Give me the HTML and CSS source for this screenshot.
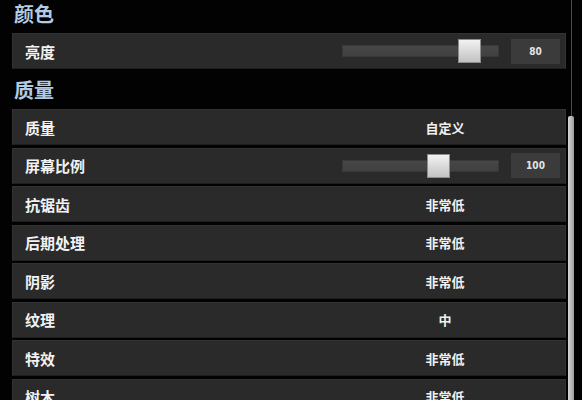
FILE: index.html
```html
<!DOCTYPE html>
<html lang="zh">
<head>
<meta charset="utf-8">
<title>设置</title>
<link rel="stylesheet" href="styles.css">
</head>
<body>
<div class="page">
  <div class="content">
    <h2 class="section first">颜色</h2>
    <div class="row">
      <span class="label">亮度</span>
      <div class="control slider">
        <div class="track"><div class="thumb" style="left:115px"></div></div>
        <div class="value-box">80</div>
      </div>
    </div>

    <h2 class="section">质量</h2>
    <div class="row">
      <span class="label">质量</span>
      <div class="control choice">自定义</div>
    </div>
    <div class="row">
      <span class="label">屏幕比例</span>
      <div class="control slider">
        <div class="track"><div class="thumb" style="left:84px"></div></div>
        <div class="value-box">100</div>
      </div>
    </div>
    <div class="row">
      <span class="label">抗锯齿</span>
      <div class="control choice">非常低</div>
    </div>
    <div class="row">
      <span class="label">后期处理</span>
      <div class="control choice">非常低</div>
    </div>
    <div class="row">
      <span class="label">阴影</span>
      <div class="control choice">非常低</div>
    </div>
    <div class="row">
      <span class="label">纹理</span>
      <div class="control choice">中</div>
    </div>
    <div class="row">
      <span class="label">特效</span>
      <div class="control choice">非常低</div>
    </div>
    <div class="row">
      <span class="label">树木</span>
      <div class="control choice">非常低</div>
    </div>
  </div>
  <div class="scrollbar">
    <div class="scroll-line"></div>
    <div class="scroll-thumb"></div>
  </div>
</div>
</body>
</html>
```

FILE: styles.css
```css
* { box-sizing: border-box; }
html, body {
  margin: 0;
  padding: 0;
  background: #020202;
}
body {
  font-family: "Noto Sans CJK SC", "Noto Sans", sans-serif;
  color: #f0f0f0;
}
.page {
  display: flex;
  height: 400px;
  overflow: hidden;
}
.content {
  width: 566px;
  padding-left: 12px;
  flex: none;
}
.section {
  margin: 7px 0 5px 2px;
  height: 28px;
  line-height: 27px;
  font-size: 20px;
  font-weight: 700;
  color: #b3cbe2;
}
.section.first {
  margin-top: 0;
}
.row {
  display: grid;
  grid-template-columns: 1fr 230px;
  align-items: center;
  height: 36px;
  margin-bottom: 2.5px;
  padding: 0 5px 0 12px;
  background: #2a2a2a;
  border: 1px solid #323232;
  border-bottom-color: #1e1e1e;
}
.label {
  font-size: 15px;
  font-weight: 700;
  color: #f2f2f2;
  line-height: 1;
}
.control.choice {
  text-align: center;
  font-size: 13px;
  font-weight: 700;
  color: #f0f0f0;
  line-height: 1;
}
.control.slider {
  display: flex;
  align-items: center;
  gap: 12px;
  padding-left: 12px;
}
.track {
  position: relative;
  width: 157px;
  height: 12px;
  background: linear-gradient(#474747, #404040);
  border: 1px solid #383838;
}
.thumb {
  position: absolute;
  top: -7px;
  width: 23px;
  height: 24px;
  background: linear-gradient(#f2f2f2, #c2c2c2);
  border: 1px solid #8d8d8d;
}
.value-box {
  width: 49px;
  height: 25px;
  background: #3b3b3b;
  display: flex;
  align-items: center;
  justify-content: center;
  font-family: "DejaVu Sans Condensed", "DejaVu Sans", sans-serif;
  font-stretch: condensed;
  font-size: 10px;
  font-weight: 700;
  color: #e4e4e4;
}
.scrollbar {
  position: relative;
  width: 6px;
  margin-left: 2px;
  flex: none;
}
.scroll-line {
  position: absolute;
  left: 3px;
  top: 0;
  width: 1px;
  height: 118px;
  background: #4a4a4a;
}
.scroll-thumb {
  position: absolute;
  left: 0;
  top: 116px;
  width: 6px;
  height: 300px;
  background: linear-gradient(90deg, #d6d6d6, #b4b4b4 60%, #9a9a9a);
  border-radius: 2px 2px 0 0;
}
```
